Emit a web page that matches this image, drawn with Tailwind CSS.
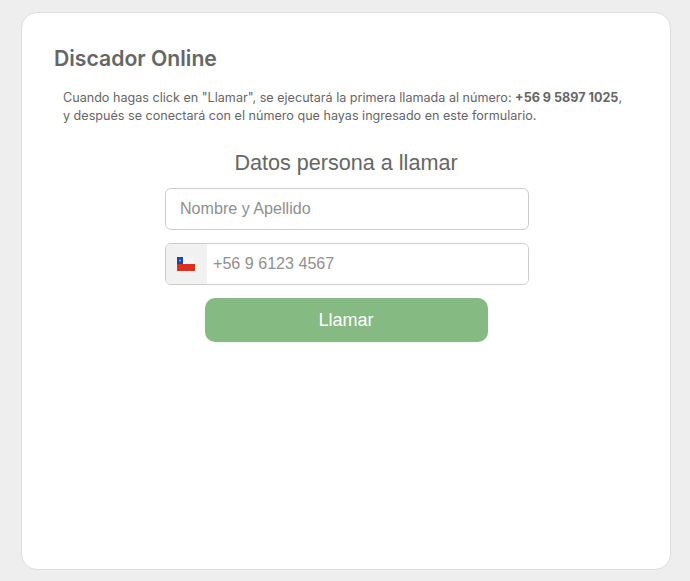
<!DOCTYPE html>
<html lang="es">
<head>
    <meta charset="UTF-8">
    <meta name="viewport" content="width=device-width, initial-scale=1.0">
    <title>Discador Online</title>
    <script src="https://cdn.jsdelivr.net/npm/@tailwindcss/browser@4"></script>
</head>
<body class="bg-[#eeeeee] h-[581px] overflow-hidden font-['Inter',sans-serif] text-[#666666]">

    <div class="ml-[21px] mt-[12px] w-[650px] h-[558px] bg-white border border-[#dddddd] rounded-2xl pt-[31px]">
        <h1 class="ml-[32px] text-[21.2px] leading-[28px] font-semibold">Discador Online</h1>
        <p class="ml-[41px] mt-[17px] text-[12.6px] leading-[18px]">
            Cuando hagas click en "Llamar", se ejecutará la primera llamada al número: <strong class="font-bold">+56 9 5897 1025</strong>,<br>
            y después se conectará con el número que hayas ingresado en este formulario.
        </p>

        <form class="flex flex-col items-center font-['Liberation_Sans',sans-serif]">
            <h2 class="mt-[24px] text-[21.6px] leading-[28px] text-center">Datos persona a llamar</h2>

            <input type="text" placeholder="Nombre y Apellido" class="mt-[11px] ml-[2px] w-[364px] h-[42px] px-[14px] pb-[1px] bg-white border border-[#cccccc] rounded-md text-[16.1px] placeholder:text-[#8f8f8f] outline-none">

            <div class="mt-[13px] ml-[2px] w-[364px] h-[42px] flex border border-[#cccccc] rounded-md overflow-hidden">
                <div class="w-[41px] bg-[#f1f1f1] pl-[11px] flex items-center">
                    <svg width="18" height="14" viewBox="0 0 18 14">
                        <rect width="18" height="14" fill="#f4f4f4"/>
                        <rect y="7" width="18" height="7" fill="#d8321f"/>
                        <rect width="6" height="7" fill="#1746a8"/>
                        <circle cx="3" cy="3.5" r="1.1" fill="#8fa6dd"/>
                    </svg>
                </div>
                <input type="tel" placeholder="+56 9 6123 4567" class="flex-1 px-[6px] pb-[2px] bg-white text-[16.1px] placeholder:text-[#8f8f8f] outline-none">
            </div>

            <button type="button" class="mt-[13px] w-[283px] h-[44px] bg-[#85ba83] text-white text-[18px] font-medium rounded-[10px]">Llamar</button>
        </form>
    </div>

</body>
</html>
